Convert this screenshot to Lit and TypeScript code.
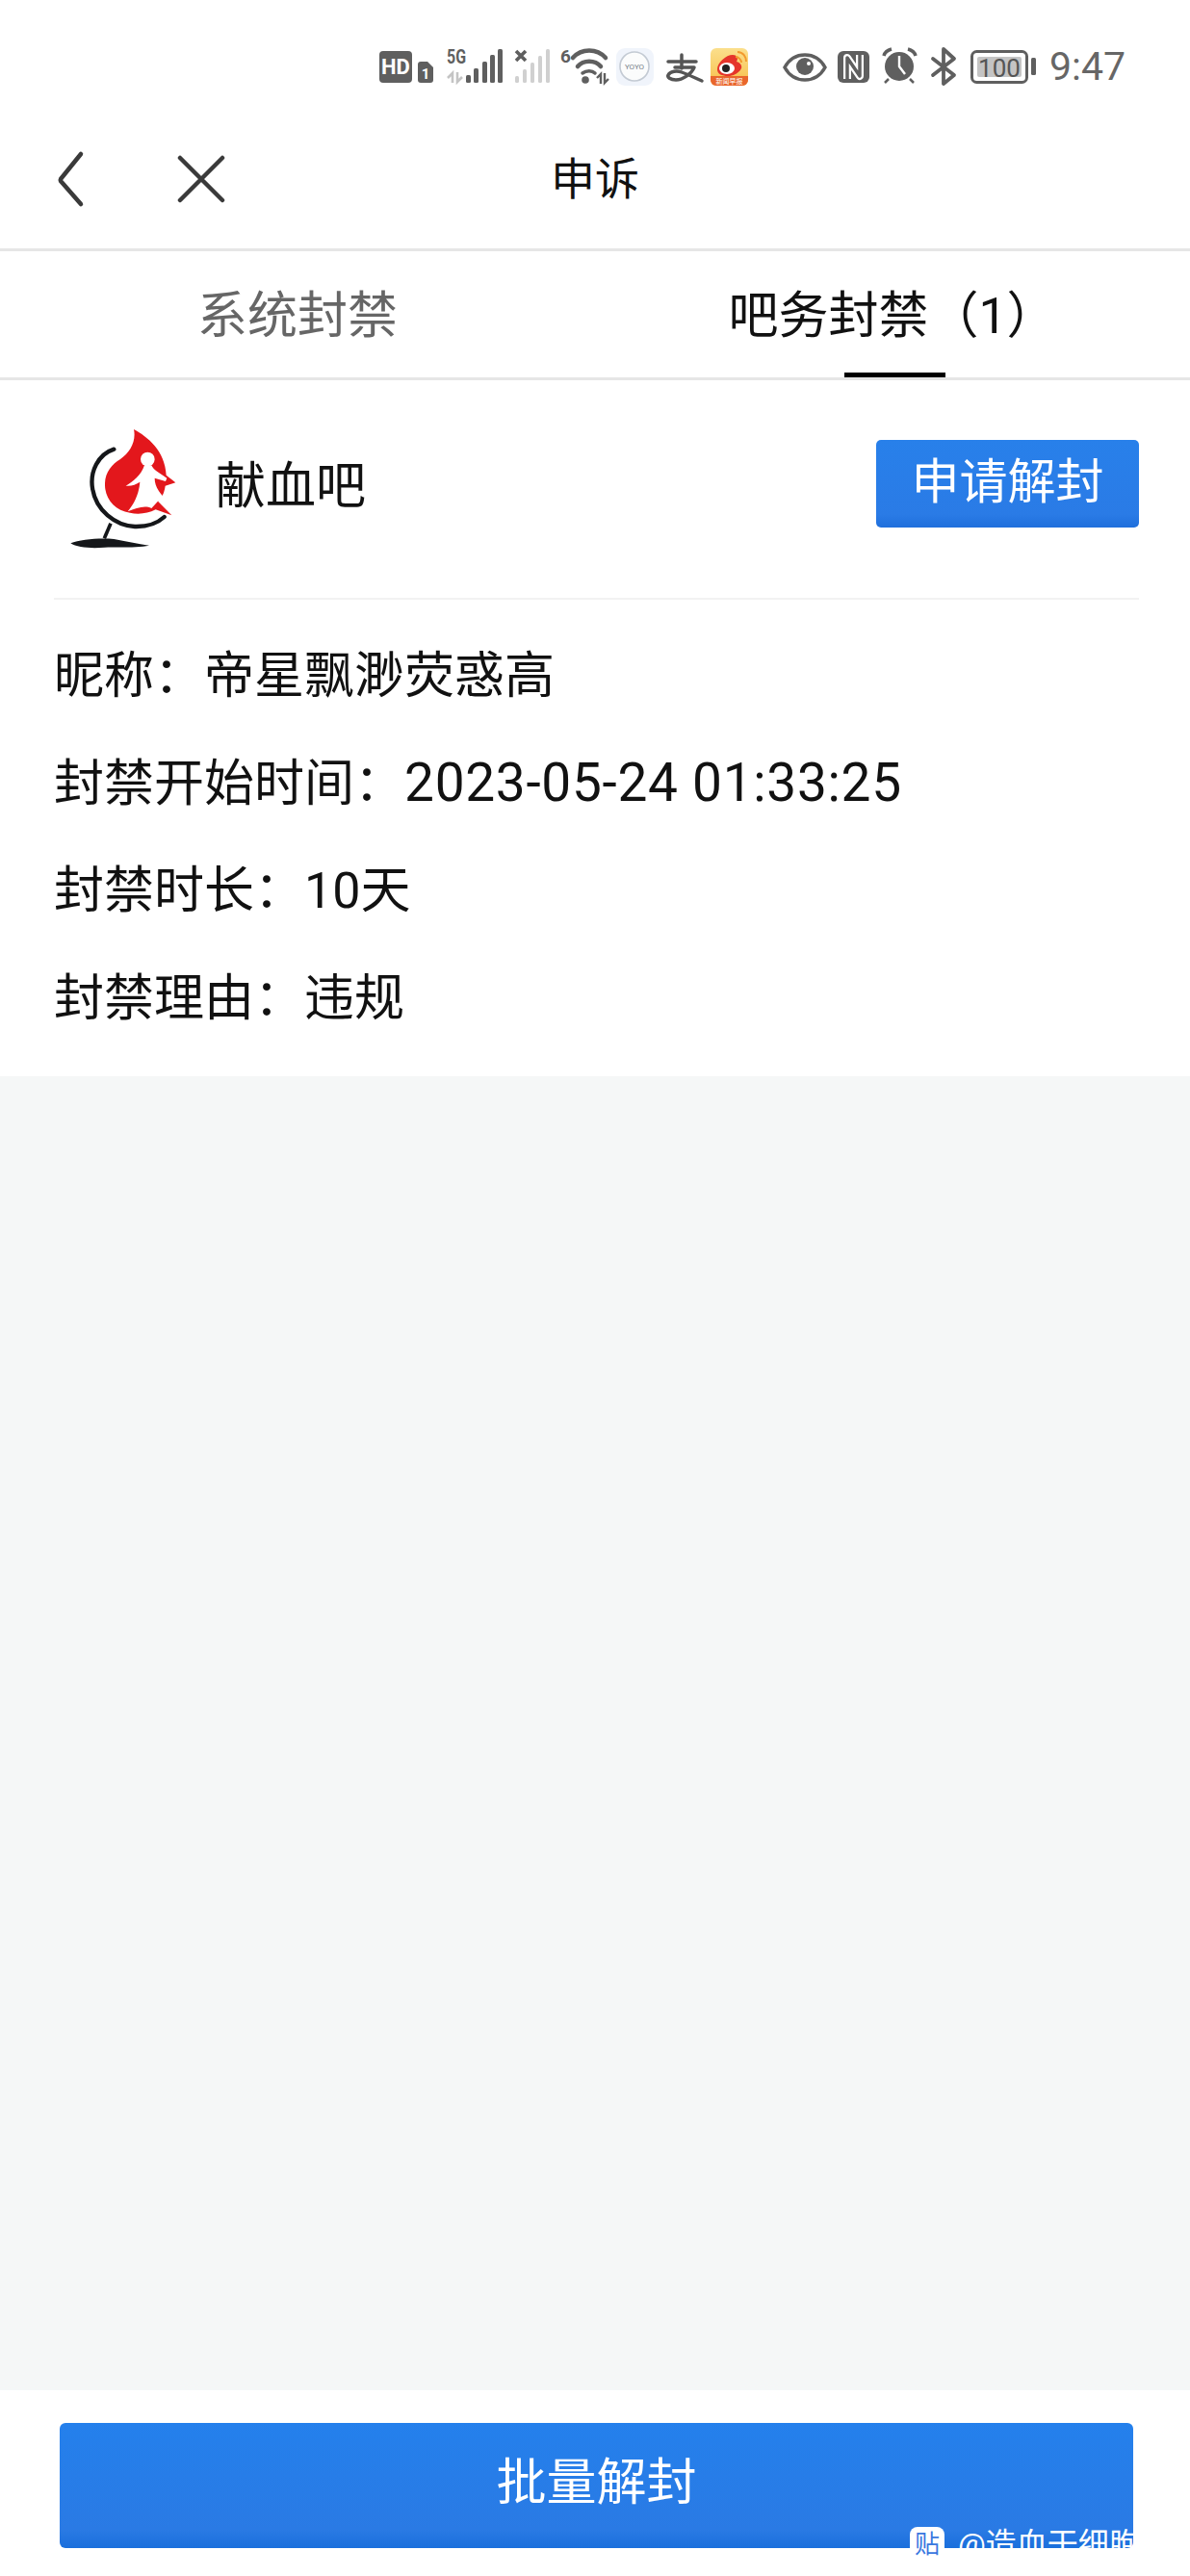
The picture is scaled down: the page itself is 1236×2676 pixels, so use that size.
import { LitElement, html, css, svg } from "lit";
import { customElement } from "lit/decorators.js";

const GREY = "#5f5f5f";

// status bar indicators, drawn in page coordinates
const statusIcons = svg`
  <rect x="394" y="53" width="34" height="33" rx="4" fill="${GREY}"/>
  <text x="411" y="77" text-anchor="middle" font-size="22" font-weight="700" fill="#fff" font-family="Roboto, sans-serif">HD</text>
  <path d="M434 67a3 3 0 0 1 3-3h7l6 6v13a3 3 0 0 1-3 3h-10a3 3 0 0 1-3-3z" fill="${GREY}"/>
  <text x="442" y="82" text-anchor="middle" font-size="15" font-weight="700" fill="#fff" font-family="Roboto, sans-serif">1</text>

  <text x="464" y="66" font-size="20" font-weight="700" fill="${GREY}" font-family="'Liberation Sans Narrow', Roboto, sans-serif" textLength="20" lengthAdjust="spacingAndGlyphs">5G</text>
  <path d="M470 86V76l-5 5M475 75v10l5-5" stroke="#c4c4c4" stroke-width="2.600" fill="none"/>
  <g fill="${GREY}">
    <rect x="484" y="78" width="5" height="8" rx="1.500"/>
    <rect x="492" y="71" width="5" height="15" rx="1.500"/>
    <rect x="501" y="64" width="5" height="22" rx="1.500"/>
    <rect x="509" y="57" width="5" height="29" rx="1.500"/>
    <rect x="517" y="51" width="5" height="35" rx="1.500"/>
  </g>

  <path d="M536 53l10 10M546 53l-10 10" stroke="${GREY}" stroke-width="3.600"/>
  <g fill="#d0d0d0">
    <rect x="535" y="79" width="4" height="7" rx="1.500"/>
    <rect x="543" y="72" width="4" height="14" rx="1.500"/>
    <rect x="551" y="65" width="4" height="21" rx="1.500"/>
    <rect x="559" y="58" width="4" height="28" rx="1.500"/>
    <rect x="567" y="51" width="4" height="35" rx="1.500"/>
  </g>

  <text x="582" y="65" font-size="19" font-weight="700" fill="${GREY}" font-family="Roboto, sans-serif">6</text>
  <g fill="none" stroke="${GREY}" stroke-width="4.500" stroke-linecap="round">
    <path d="M595 60C604 50 620 50 629 60"/>
    <path d="M600 69C606 62 618 62 624 69"/>
    <path d="M605 76C609 73 615 73 618 76" stroke-width="3.500"/>
  </g>
  <circle cx="608" cy="83" r="3.800" fill="${GREY}"/>
  <path d="M624 87V77l-4 4M628 76v10l4-4" stroke="${GREY}" stroke-width="2.400" fill="none"/>

  <rect x="640" y="50" width="39" height="39" rx="9" fill="#f0f4fb"/>
  <circle cx="659" cy="69" r="15" fill="#fbfcfc" stroke="#c3cad3" stroke-width="1.600"/>
  <text x="659" y="72" text-anchor="middle" font-size="8" fill="#7a828c" font-family="Roboto, sans-serif">YOYO</text>

  <g fill="none" stroke="#555" stroke-width="3.500" stroke-linecap="round" stroke-linejoin="round">
    <path d="M694 64h29M708 57v14"/>
    <path d="M701 70h20c-3 7-12 13-19 13-6 0-9-3-8-5 2-4 9-5 14-3 8 3 14 6 21 9"/>
  </g>

  <defs>
    <linearGradient id="wb" x1="0" y1="0" x2="0" y2="1">
      <stop offset="0" stop-color="#fbdf8c"/>
      <stop offset="0.7" stop-color="#f8c95e"/>
      <stop offset="1" stop-color="#f5a623"/>
    </linearGradient>
  </defs>
  <rect x="738" y="50" width="39" height="39" rx="6" fill="url(#wb)"/>
  <path d="M738 79h39v4a6 6 0 0 1-6 6h-27a6 6 0 0 1-6-6z" fill="#e9662c"/>
  <path d="M745 72c0-7 9-15 16-15 5 0 6 4 4 7 4 1 6 4 5 7-2 5-9 8-14 8-6 0-11-2-11-7z" fill="#e5352b"/>
  <ellipse cx="755" cy="71" rx="8" ry="6" fill="#fff"/>
  <circle cx="754" cy="71" r="4" fill="#222"/>
  <path d="M764 59c3 0 6 3 6 6M766 54c6 0 9 5 9 10" stroke="#f29a2e" stroke-width="2" fill="none"/>
  <text x="757.500" y="87" text-anchor="middle" font-size="7" fill="#fff" font-family="'Noto Sans CJK SC', sans-serif">新闻早报</text>

  <path d="M815 70c5-9 13-13 21-13s16 4 21 13c-5 9-13 13-21 13s-16-4-21-13z" fill="none" stroke="${GREY}" stroke-width="3.500"/>
  <circle cx="836" cy="69" r="9" fill="${GREY}"/>
  <circle cx="840" cy="66" r="2" fill="#fff"/>

  <rect x="870" y="53" width="33" height="33" rx="6" fill="${GREY}"/>
  <path d="M880 82V60l13 19V57" fill="none" stroke="#fff" stroke-width="8" stroke-linejoin="round"/>
  <path d="M880 83V60l13 19V56" fill="none" stroke="${GREY}" stroke-width="3.500" stroke-linejoin="round"/>

  <circle cx="934" cy="69" r="15" fill="${GREY}"/>
  <path d="M934 58v11l6 8" stroke="#fff" stroke-width="2.400" fill="none"/>
  <path d="M918 58c1-4 4-6 8-7M951 58c-1-4-4-6-8-7" stroke="${GREY}" stroke-width="3.500" fill="none"/>
  <path d="M923 82l-4 4M945 82l4 4" stroke="${GREY}" stroke-width="2.500"/>

  <path d="M969 61L991 78L980 87V51L991 61L969 78" fill="none" stroke="${GREY}" stroke-width="3.800" stroke-linejoin="round" stroke-linecap="round"/>

  <rect x="1009.500" y="53.500" width="57" height="32" rx="5" fill="none" stroke="${GREY}" stroke-width="3"/>
  <rect x="1015" y="59" width="46" height="21" rx="2" fill="#c4c4c4"/>
  <rect x="1071" y="60" width="5" height="18" rx="1.500" fill="${GREY}"/>
  <text x="1038" y="80" text-anchor="middle" font-size="26" fill="#555" font-family="Roboto, sans-serif">100</text>
`;

const logo = svg`
  <path d="M297 72C340 95 395 140 398 215L427 238L395 248C392 270 385 285 372 296L415 340L365 322C340 335 310 338 285 332C235 325 205 285 207 240C208 205 230 180 255 165C285 145 305 110 297 72Z" fill="#e3171c"/>
  <circle cx="340" cy="165" r="22" fill="#fff"/>
  <path d="M330 184L352 184C356 195 370 205 400 224L396 234L362 224C362 245 372 265 392 285L372 296L352 318C330 308 305 318 278 328C296 305 312 280 316 236C304 244 288 250 272 248C294 236 320 215 330 184Z" fill="#fff"/>
  <path d="M235 134C185 150 160 205 168 255C178 325 240 372 300 375C335 376 370 365 392 345" fill="none" stroke="#15171a" stroke-width="13" stroke-linecap="round"/>
  <path d="M225 365L205 412" stroke="#15171a" stroke-width="11"/>
  <path d="M100 427C130 415 190 410 235 414C270 420 310 430 345 434C310 442 250 438 205 440C165 444 120 440 100 427Z" fill="#15171a"/>
`;

@customElement("app-root")
export class AppRoot extends LitElement {
  static styles = css`
    :host {
      display: block;
      width: 1236px;
      height: 2676px;
      background: #fff;
      font-family: Roboto, "Noto Sans CJK SC", sans-serif;
      color: #111;
    }
    .page {
      height: 2676px;
      display: flex;
      flex-direction: column;
      position: relative;
      overflow: hidden;
    }
    .status {
      height: 130px;
      display: flex;
      align-items: flex-start;
      flex: none;
    }
    .status svg {
      display: block;
    }
    .time {
      font-size: 41px;
      line-height: 41px;
      margin: 49px 0 0 12px;
      color: #666;
    }
    .nav {
      height: 112px;
      padding-bottom: 16px;
      flex: none;
      display: grid;
      grid-template-columns: 1fr auto 1fr;
      align-items: center;
      border-bottom: 3px solid #e6e6e6;
    }
    .nav-left {
      display: flex;
      align-items: center;
      padding-left: 56px;
      gap: 94px;
    }
    .nav-left svg {
      display: block;
      fill: none;
      stroke: #3a3a3a;
      stroke-width: 4.5;
      stroke-linecap: round;
      stroke-linejoin: round;
    }
    .title {
      font-size: 46px;
      line-height: 64px;
    }
    .tabs {
      height: 131px;
      flex: none;
      display: grid;
      grid-template-columns: 1fr 1fr;
      border-bottom: 3px solid #e6e6e6;
    }
    .tab {
      position: relative;
      display: flex;
      align-items: center;
      justify-content: center;
      padding-bottom: 6px;
      font-size: 52px;
      color: #666;
    }
    .tab.on {
      color: #111;
    }
    .tab.on::after {
      content: "";
      position: absolute;
      bottom: 0;
      left: 259px;
      width: 105px;
      height: 5px;
      background: #000;
    }
    .forum {
      height: 228px;
      flex: none;
      margin: 0 53px 0 56px;
      display: flex;
      align-items: center;
      border-bottom: 2px solid #f2f2f2;
      box-sizing: border-box;
    }
    .logo {
      display: block;
      margin: -12px 24px 0 -16px;
    }
    .forum-name {
      flex: 1;
      padding-bottom: 16px;
      font-size: 52px;
    }
    .apply {
      width: 273px;
      height: 91px;
      padding-bottom: 12px;
      margin-top: -12px;
      box-sizing: border-box;
      border-radius: 5px;
      background: linear-gradient(#2880ea 0%, #2a7be6 85%, #1f6fdc 100%);
      color: #fff;
      font-size: 50px;
      display: flex;
      align-items: center;
      justify-content: center;
    }
    .info {
      flex: none;
      padding: 24px 56px 0;
      font-size: 52px;
      line-height: 111.5px;
      height: 495px;
      box-sizing: border-box;
    }
    .info > div {
      height: 111.5px;
    }
    .num {
      font-size: 55px;
      letter-spacing: 0.7px;
      line-height: 1;
    }
    .empty {
      flex: 1;
      background: #f5f7f7;
    }
    .footer {
      height: 193px;
      flex: none;
      padding: 34px 59px 0 62px;
      box-sizing: border-box;
    }
    .batch {
      height: 130px;
      padding-bottom: 16px;
      box-sizing: border-box;
      border-radius: 6px;
      background: linear-gradient(#2480ec 0%, #2a7ae4 85%, #1a6fdc 100%);
      color: #fff;
      font-size: 52px;
      display: flex;
      align-items: center;
      justify-content: center;
    }
    .mark {
      position: absolute;
      left: 945px;
      top: 2625px;
      display: flex;
      gap: 14px;
      color: #fff;
      font-size: 32px;
      line-height: 36px;
      white-space: nowrap;
    }
    .mark-icon {
      flex: none;
      width: 36px;
      height: 36px;
      border-radius: 8px;
      background: #fff;
      color: #3a78e0;
      font-size: 26px;
      line-height: 36px;
      text-align: center;
    }
  `;

  render() {
    return html`
      <div class="page">
        <div class="status">
          <svg width="1078" height="130" viewBox="0 0 1078 130">${statusIcons}</svg>
          <div class="time">9:47</div>
        </div>
        <div class="nav">
          <div class="nav-left">
            <svg width="34" height="60" viewBox="0 0 34 60">
              <path d="M28 4L7 30a2 2 0 0 0 0 2L28 56" />
            </svg>
            <svg width="50" height="50" viewBox="0 0 50 50">
              <path d="M3 3L47 47M47 3L3 47" />
            </svg>
          </div>
          <div class="title">申诉</div>
          <div></div>
        </div>
        <div class="tabs">
          <div class="tab">系统封禁</div>
          <div class="tab on">吧务封禁（1）</div>
        </div>
        <div class="forum">
          <svg class="logo" width="160" height="160" viewBox="0 0 480 480">${logo}</svg>
          <div class="forum-name">献血吧</div>
          <div class="apply">申请解封</div>
        </div>
        <div class="info">
          <div>昵称：帝星飘渺荧惑高</div>
          <div>封禁开始时间：<span class="num">2023-05-24 01:33:25</span></div>
          <div>封禁时长：10天</div>
          <div>封禁理由：违规</div>
        </div>
        <div class="empty"></div>
        <div class="footer">
          <div class="batch">批量解封</div>
        </div>
        <div class="mark">
          <div class="mark-icon">贴</div>
          <div>@造血干细胞</div>
        </div>
      </div>
    `;
  }
}
